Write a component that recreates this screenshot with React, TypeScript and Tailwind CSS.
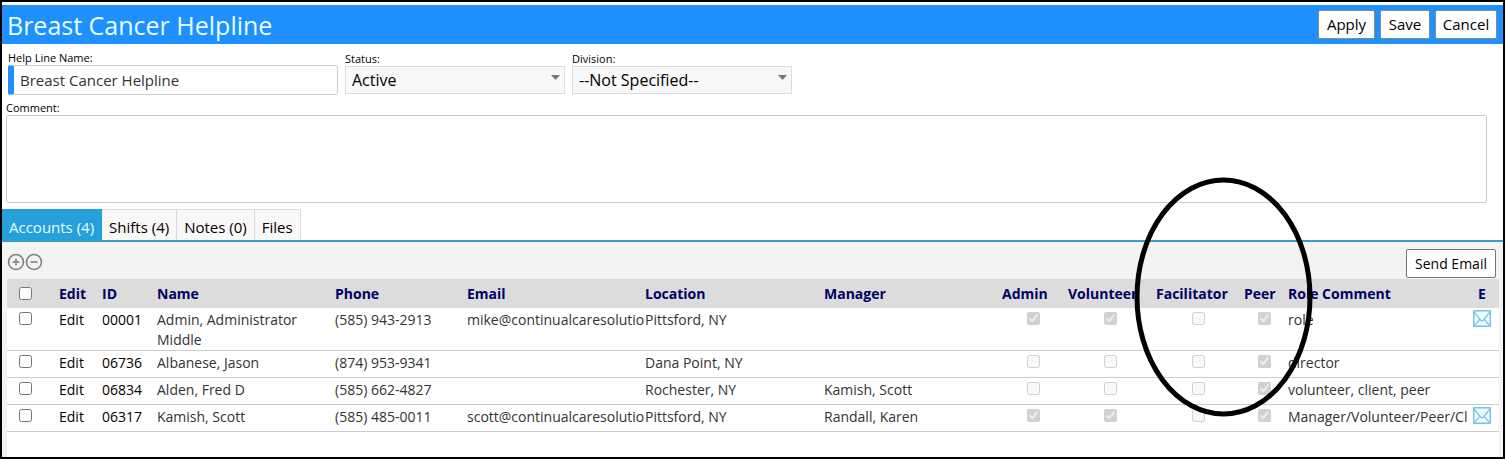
import clsx from "clsx";
import { useState } from "react";

type Account = {
  id: string;
  name: string;
  phone: string;
  email?: string;
  location: string;
  manager?: string;
  admin: boolean;
  volunteer: boolean;
  facilitator: boolean;
  peer: boolean;
  comment: string;
};

const accounts: Account[] = [
  {
    id: "00001",
    name: "Admin, Administrator Middle",
    phone: "(585) 943-2913",
    email: "mike@continualcaresolutio",
    location: "Pittsford, NY",
    admin: true,
    volunteer: true,
    facilitator: false,
    peer: true,
    comment: "role",
  },
  {
    id: "06736",
    name: "Albanese, Jason",
    phone: "(874) 953-9341",
    location: "Dana Point, NY",
    admin: false,
    volunteer: false,
    facilitator: false,
    peer: true,
    comment: "director",
  },
  {
    id: "06834",
    name: "Alden, Fred D",
    phone: "(585) 662-4827",
    location: "Rochester, NY",
    manager: "Kamish, Scott",
    admin: false,
    volunteer: false,
    facilitator: false,
    peer: true,
    comment: "volunteer, client, peer",
  },
  {
    id: "06317",
    name: "Kamish, Scott",
    phone: "(585) 485-0011",
    email: "scott@continualcaresolutio",
    location: "Pittsford, NY",
    manager: "Randall, Karen",
    admin: true,
    volunteer: true,
    facilitator: false,
    peer: true,
    comment: "Manager/Volunteer/Peer/Cl",
  },
];

const roles = ["admin", "volunteer", "facilitator", "peer"] as const;

const headings = [
  "Edit",
  "ID",
  "Name",
  "Phone",
  "Email",
  "Location",
  "Manager",
  "Admin",
  "Volunteer",
  "Facilitator",
  "Peer",
  "Role Comment",
];

const tabs = ["Accounts (4)", "Shifts (4)", "Notes (0)", "Files"];

function SelectField({ id, label, options }: { id: string; label: string; options: string[] }) {
  return (
    <div className="flex w-[220px] flex-col pb-px">
      <label htmlFor={id} className="text-[11px] leading-[14px]">
        {label}
      </label>
      <div className="relative">
        <select
          id={id}
          className="h-7 w-full appearance-none border border-[#dcdcdc] bg-[#f8f8f8] px-1.5 text-base leading-5"
        >
          {options.map((option) => (
            <option key={option}>{option}</option>
          ))}
        </select>
        <svg className="pointer-events-none absolute top-[9px] right-[5px] h-[5px] w-[9px]" viewBox="0 0 9 5">
          <path d="M0 0h9L4.5 5z" fill="#777" />
        </svg>
      </div>
    </div>
  );
}

function CircleButton({ label, plus }: { label: string; plus?: boolean }) {
  return (
    <button aria-label={label} className="cursor-pointer">
      <svg className="h-[18px] w-[18px]" viewBox="0 0 18 18" fill="none" stroke="#808080">
        <circle cx="9" cy="9" r="7.5" strokeWidth="1.6" />
        <path d={plus ? "M5.5 9h7M9 5.5v7" : "M5.5 9h7"} strokeWidth="1.6" />
      </svg>
    </button>
  );
}

function MailIcon() {
  return (
    <svg className="h-[17px] w-[18px]" viewBox="0 0 18 17" fill="none" stroke="#74c2e4">
      <rect x="0.7" y="0.7" width="16.6" height="15.6" rx="0.5" fill="#f3fbff" strokeWidth="1.4" />
      <path d="M1 2l6.5 8q1.5 1.6 3 0L17 2M1.5 15.5l5.3-6.2M16.5 15.5l-5.3-6.2" strokeWidth="1.2" />
    </svg>
  );
}

export default function App() {
  const [activeTab, setActiveTab] = useState(tabs[0]);

  return (
    <div className="relative flex min-h-screen flex-col border-2 border-black bg-white pt-[3px] font-['Open_Sans','Noto_Sans',sans-serif] text-black">
      {/* title bar */}
      <header className="flex h-[39px] items-center justify-between bg-[#1e90ff] pr-1.5 pl-[5px]">
        <h1 className="text-[25px] leading-8 text-[#e6ffff]">Breast Cancer Helpline</h1>
        <div className="flex gap-[5px] text-[15px] leading-5">
          <button className="h-[29px] w-[57px] rounded-xs border border-[#8a8a8a] bg-white pb-0.5">Apply</button>
          <button className="h-[29px] w-[50px] rounded-xs border border-[#8a8a8a] bg-white pb-0.5">Save</button>
          <button className="h-[29px] w-[62px] rounded-xs border border-[#8a8a8a] bg-white pb-0.5">Cancel</button>
        </div>
      </header>

      {/* help line fields */}
      <section className="flex items-end gap-[7px] pt-[7px] pl-1.5">
        <div className="flex w-[330px] flex-col">
          <label htmlFor="name" className="text-[11px] leading-[14px]">
            Help Line Name:
          </label>
          <input
            id="name"
            defaultValue="Breast Cancer Helpline"
            className="h-[30px] rounded-xs border border-l-6 border-[#ccc] border-l-[#1e90ff] px-1.5 text-[15px] leading-5 text-[#333]"
          />
        </div>
        <SelectField id="status" label="Status:" options={["Active", "Inactive"]} />
        <SelectField id="division" label="Division:" options={["--Not Specified--"]} />
      </section>

      <section className="flex flex-col pt-1.5 pr-4 pl-1">
        <label htmlFor="comment" className="text-[11px] leading-[14px]">
          Comment:
        </label>
        <textarea id="comment" className="h-[88px] resize-none rounded-xs border border-[#ccc] p-1 text-[15px]" />
      </section>

      {/* tabs */}
      <nav className="mt-1.5 flex border-b-2 border-[#3c9cc8] text-[15px] leading-5">
        {tabs.map((tab) => (
          <button
            key={tab}
            onClick={() => setActiveTab(tab)}
            className={clsx(
              "h-[31px] cursor-pointer border-t border-r px-[7px] pt-1",
              tab === activeTab
                ? "border-[#25a0da] bg-[#25a0da] text-[#e6ffff]"
                : "border-[#dcdcdc] bg-[#f8f8f8]",
            )}
          >
            {tab}
          </button>
        ))}
      </nav>

      {/* accounts panel */}
      <section className="flex flex-1 flex-col bg-[#f3f3f3] pr-1 pl-[5px]">
        <div className="flex h-[37px] items-start justify-between pt-[7px]">
          <div className="flex pt-1">
            <CircleButton label="Add" plus />
            <CircleButton label="Remove" />
          </div>
          <button className="mr-[3px] h-[29px] w-[90px] rounded-xs border border-[#767676] bg-white text-sm leading-5">
            Send Email
          </button>
        </div>

        <div className="flex-1 bg-white">
          <table className="w-full table-fixed border-separate border-spacing-0 text-left text-sm leading-5 text-[#333]">
            <colgroup>
              <col className="w-12" />
              <col className="w-[43px]" />
              <col className="w-[55px]" />
              <col className="w-[178px]" />
              <col className="w-[132px]" />
              <col className="w-[178px]" />
              <col className="w-[179px]" />
              <col className="w-[178px]" />
              <col className="w-[66px]" />
              <col className="w-[88px]" />
              <col className="w-[88px]" />
              <col className="w-[44px]" />
              <col />
              <col className="w-[34px]" />
            </colgroup>
            <thead>
              <tr className="h-[29px] bg-[#dcdcdc] whitespace-nowrap text-[#000066]">
                <th className="pl-3">
                  <input type="checkbox" aria-label="Select all" className="block" />
                </th>
                {headings.map((heading) => (
                  <th key={heading} className="pl-1 font-bold">
                    {heading}
                  </th>
                ))}
                <th className="text-center font-bold">E</th>
              </tr>
            </thead>
            <tbody>
              {accounts.map((account) => (
                <tr
                  key={account.id}
                  className="h-[27px] align-top *:border-b *:border-[#ccc] *:pt-0.5 *:pl-1"
                >
                  <td>
                    <input
                      type="checkbox"
                      aria-label={`Select ${account.name}`}
                      className="mt-0.5 ml-2 block"
                    />
                  </td>
                  <td>
                    <a href="#edit" className="text-black">
                      Edit
                    </a>
                  </td>
                  <td className="text-black">{account.id}</td>
                  <td>{account.name}</td>
                  <td>{account.phone}</td>
                  <td className="whitespace-nowrap">{account.email}</td>
                  <td>{account.location}</td>
                  <td>{account.manager}</td>
                  {roles.map((role) => (
                    <td key={role}>
                      <input
                        type="checkbox"
                        aria-label={role}
                        checked={account[role]}
                        disabled
                        readOnly
                        className="mx-auto mt-0.5 block"
                      />
                    </td>
                  ))}
                  <td className="whitespace-nowrap">{account.comment}</td>
                  <td>
                    {account.email && (
                      <a href="#mail" aria-label={`Email ${account.name}`} className="block pl-1">
                        <MailIcon />
                      </a>
                    )}
                  </td>
                </tr>
              ))}
            </tbody>
          </table>
        </div>
      </section>

      {/* highlight around the facilitator and peer columns */}
      <svg
        className="pointer-events-none absolute top-[174px] left-[1132px] h-[242px] w-[179px]"
        viewBox="0 0 179 242"
        fill="none"
      >
        <ellipse cx="89.5" cy="121" rx="86.5" ry="117" stroke="#000" strokeWidth="5" />
      </svg>
    </div>
  );
}
